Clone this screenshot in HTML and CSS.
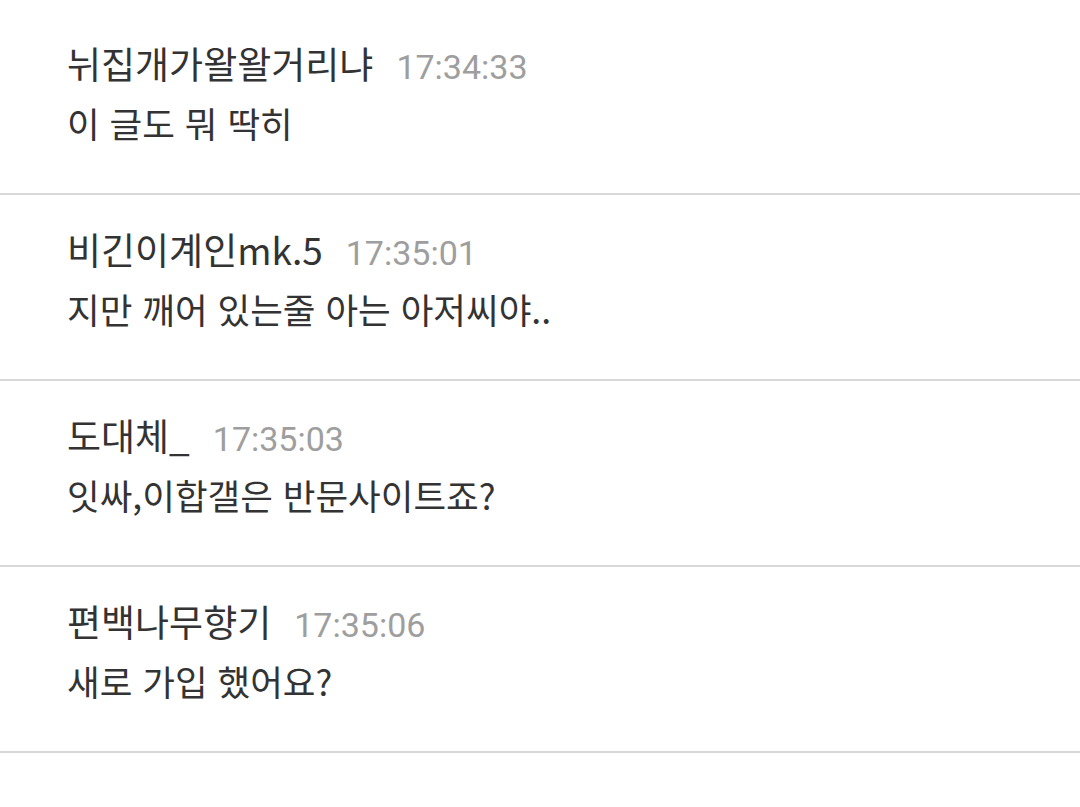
FILE: index.html
```html
<!DOCTYPE html>
<html lang="ko">
<head>
    <meta charset="UTF-8">
    <meta name="viewport" content="width=device-width, initial-scale=1.0">
    <title>채팅</title>
    <link rel="stylesheet" href="styles.css">
</head>
<body>
    <ul class="chat-list">
        <li class="chat-item">
            <div class="chat-head">
                <span class="chat-name">뉘집개가왈왈거리냐</span>
                <span class="chat-time">17:34:33</span>
            </div>
            <div class="chat-text">이 글도 뭐 딱히</div>
        </li>
        <li class="chat-item">
            <div class="chat-head">
                <span class="chat-name">비긴이계인mk.5</span>
                <span class="chat-time">17:35:01</span>
            </div>
            <div class="chat-text">지만 깨어 있는줄 아는 아저씨야..</div>
        </li>
        <li class="chat-item">
            <div class="chat-head">
                <span class="chat-name">도대체_</span>
                <span class="chat-time">17:35:03</span>
            </div>
            <div class="chat-text">잇싸,이합갤은 반문사이트죠?</div>
        </li>
        <li class="chat-item">
            <div class="chat-head">
                <span class="chat-name">편백나무향기</span>
                <span class="chat-time">17:35:06</span>
            </div>
            <div class="chat-text">새로 가입 했어요?</div>
        </li>
    </ul>
</body>
</html>
```

FILE: styles.css
```css
/* General styling */
body {
    margin: 0;
    background-color: #ffffff;
    font-family: "Noto Sans CJK KR", "Noto Sans", sans-serif;
    color: #333333;
    overflow: hidden;
}

.chat-list {
    list-style: none;
    margin: 0;
    padding: 9px 0 0;
}

.chat-item {
    padding: 24px 67px 40px;
    border-bottom: 2px solid #d8d8d8;
}

.chat-head {
    display: flex;
    align-items: baseline;
    gap: 23px;
    height: 60px;
    line-height: 60px;
}

.chat-name {
    font-size: 37px;
}

.chat-time {
    font-family: Roboto, "Liberation Sans", sans-serif;
    font-size: 34px;
    color: #9e9e9e;
}

.chat-text {
    height: 60px;
    line-height: 60px;
    font-size: 35.5px;
}
```
